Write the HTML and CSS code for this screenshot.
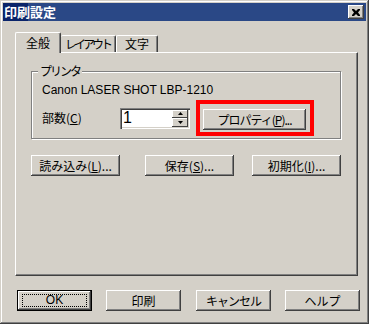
FILE: index.html
```html
<!DOCTYPE html>
<html lang="ja">
<head>
<meta charset="utf-8">
<link rel="stylesheet" href="styles.css">
</head>
<body>
<div class="window">
  <div class="titlebar">
    <span class="title">印刷設定</span>
    <span class="close"><svg width="8" height="7" viewBox="0 0 8 7"><path d="M0 0h2l2 2 2-2h2v1l-2 2.5 2 2.5v1h-2l-2-2-2 2h-2v-1l2-2.5-2-2.5z" fill="#000"/></svg></span>
  </div>
  <div class="tabs">
    <div class="tab sel">全般</div>
    <div class="tab t2">レイアウト</div>
    <div class="tab t3">文字</div>
  </div>
  <div class="panel">
    <div class="group">
      <div class="legend">プリンタ</div>
      <div class="printer">Canon LASER SHOT LBP-1210</div>
      <div class="row">
        <span class="lbl">部数(<u>C</u>)</span>
        <div class="edit">
          <span class="val">1</span>
          <div class="spin">
            <span class="sb"><svg width="5" height="3" viewBox="0 0 5 3"><path d="M2.5 0L5 3H0z" fill="#000"/></svg></span>
            <span class="sb"><svg width="5" height="3" viewBox="0 0 5 3"><path d="M0 0h5L2.5 3z" fill="#000"/></svg></span>
          </div>
        </div>
        <div class="hilite"><button class="btn prop">プロパティ(<u>P</u>)...</button></div>
      </div>
    </div>
    <div class="brow">
      <button class="btn b1">読み込み(<u>L</u>)...</button>
      <button class="btn b2">保存(<u>S</u>)...</button>
      <button class="btn b3">初期化(<u>I</u>)...</button>
    </div>
  </div>
  <div class="foot">
    <button class="btn def"><span class="focus">OK</span></button>
    <button class="btn f2">印刷</button>
    <button class="btn f3">キャンセル</button>
    <button class="btn f4">ヘルプ</button>
  </div>
</div>
</body>
</html>
```
FILE: styles.css
```css
html, body { margin: 0; padding: 0; }
body { background: #d4d0c8; width: 369px; height: 324px; overflow: hidden; }
.window {
  box-sizing: border-box; width: 369px; height: 324px; padding: 3px;
  background: #d4d0c8;
  box-shadow: inset -1px -1px #404040, inset 1px 1px #d4d0c8, inset -2px -2px #808080, inset 2px 2px #fff;
  font-family: "Noto Sans CJK JP", sans-serif; font-size: 12px; color: #000;
}
.titlebar {
  height: 18px; display: flex; align-items: center; justify-content: space-between;
  background: linear-gradient(to right, #0a246a 0, #0a246a 25px, #2a4886 25px, #2a4886 100%);
}
.title { color: #fff; font-weight: bold; font-size: 13px; line-height: 18px; padding-left: 1px; white-space: nowrap; }
.close {
  width: 16px; height: 14px; margin-right: 2px; box-sizing: border-box;
  display: flex; align-items: center; justify-content: center; background: #d4d0c8;
  box-shadow: inset -1px -1px #404040, inset 1px 1px #fff, inset -2px -2px #808080;
}
.tabs { display: flex; align-items: flex-end; height: 20px; margin: 11px 0 0 12px; }
.tab {
  box-sizing: border-box; height: 17px; line-height: 15px; text-align: center; white-space: nowrap;
  border-top: 1px solid #fff; border-left: 1px solid #fff; border-right: 1px solid #404040;
  box-shadow: inset -1px 0 #808080; border-radius: 2px 2px 0 0;
}
.tab.sel { height: 21px; width: 46px; margin-bottom: -1px; position: relative; z-index: 1; background: #d4d0c8; line-height: 19px; border-bottom: 0; }
.t2 { width: 55px; letter-spacing: -3px; padding-right: 1px; border-left: 0; }
.t3 { width: 42px; }
.panel {
  box-sizing: border-box; width: 343px; height: 224px; margin-left: 12px;
  border-top: 1px solid #fff; border-left: 1px solid #fff; border-right: 1px solid #404040; border-bottom: 1px solid #404040;
  box-shadow: inset -1px -1px #808080;
  padding: 18px 0 0 15px;
}
.group {
  box-sizing: border-box; width: 310px; height: 68px;
  border: 1px solid #808080; box-shadow: 1px 1px 0 #fff, inset 1px 1px 0 #fff;
  padding: 0 0 0 10px;
}
.legend { display: table; white-space: nowrap; margin: -8px 0 0 -4px; padding: 0 2px; background: #d4d0c8; line-height: 14px; letter-spacing: -2px; }
.printer { font-family: "Liberation Sans", sans-serif; font-size: 12px; line-height: 14px; margin-top: 5px; }
.row { display: flex; align-items: center; margin-top: 3px; }
.lbl { width: 78px; line-height: 14px; white-space: nowrap; }
.lbl u, .btn u { text-decoration: underline; }
.edit {
  box-sizing: border-box; width: 70px; height: 21px; background: #fff; display: flex; align-items: center;
  box-shadow: inset 1px 1px #808080, inset 2px 2px #404040, inset -1px -1px #fff, inset -2px -2px #d4d0c8;
  padding: 2px;
}
.val { flex: 1; font-family: "Liberation Sans", sans-serif; font-size: 16px; line-height: 16px; padding-left: 1px; }
.spin { display: flex; flex-direction: column; width: 16px; height: 17px; }
.sb {
  flex: 1; display: flex; align-items: center; justify-content: center; background: #d4d0c8;
  box-shadow: inset -1px -1px #404040, inset 1px 1px #fff;
}
.hilite { box-sizing: border-box; width: 118px; height: 36px; border: 4px solid #f00; margin-left: 6px; padding: 5px 0 0 3px; }
.btn {
  box-sizing: border-box; height: 21px; padding: 0; margin: 0; border: 0; background: #d4d0c8;
  font-family: "Noto Sans CJK JP", sans-serif; font-size: 12px; color: #000; line-height: 19px; white-space: nowrap;
  box-shadow: inset -1px -1px #404040, inset 1px 1px #fff, inset -2px -2px #808080, inset 2px 2px #d4d0c8;
  display: flex; align-items: center; justify-content: center;
}
.prop { width: 103px; letter-spacing: -1px; }
.brow { display: flex; margin-top: 16px; }
.b1, .b2, .b3 { width: 89px; }
.b2 { margin-left: 25px; }
.b3 { margin-left: 18px; }
.foot { display: flex; margin: 14px 0 0 14px; }
.foot .btn { width: 75px; }
.f2 { margin-left: 14px; }
.f3 { margin-left: 15px; letter-spacing: -1px; }
.f4 { margin-left: 14px; }
.btn.def {
  border: 1px solid #000;
  box-shadow: inset -1px -1px #404040, inset 1px 1px #fff, inset -2px -2px #808080;
}
.focus {
  box-sizing: border-box; width: 65px; height: 13px; border: 1px dotted #000;
  display: flex; align-items: center; justify-content: center; line-height: 11px;
  font-family: "Liberation Sans", sans-serif; font-size: 12px;
}
```
